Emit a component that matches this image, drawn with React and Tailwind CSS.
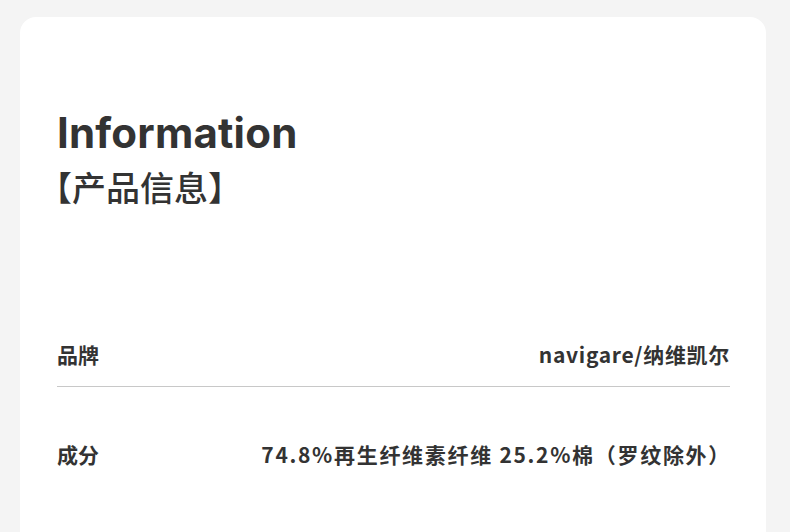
export default function App() {
  const cjk = { fontFamily: '"Noto Sans CJK SC", "Noto Sans", sans-serif' };
  return (
    <div className="w-[790px] h-[532px] overflow-hidden bg-[#f4f4f4] pt-[17px] pl-[20px]">
      <div className="w-[746px] h-[600px] bg-white rounded-[16px] pl-[37px] pr-[36px] text-[#333333]">
        <div className="pt-[91px]">
          <div className="text-[42px] leading-[50px] font-bold tracking-[0.2px]" style={{ fontFamily: 'Inter, "Noto Sans", sans-serif' }}>
            Information
          </div>
          <div className="text-[34px] leading-[44px] font-medium ml-[-19px] mt-[7px]" style={cjk}>
            【产品信息】
          </div>
        </div>
        <div className="mt-[114px]" style={cjk}>
          <div className="flex items-center justify-between h-[64px] border-b border-[#c8c8c8] text-[21px] font-bold">
            <span>品牌</span>
            <span className="font-semibold tracking-[0.7px]">navigare/纳维凯尔</span>
          </div>
          <div className="flex items-center justify-between h-[136px] text-[21px] font-bold">
            <span>成分</span>
            <span className="font-semibold tracking-[1.7px] mr-[-1px]">74.8%再生纤维素纤维 25.2%棉（罗纹除外）</span>
          </div>
        </div>
      </div>
    </div>
  );
}
